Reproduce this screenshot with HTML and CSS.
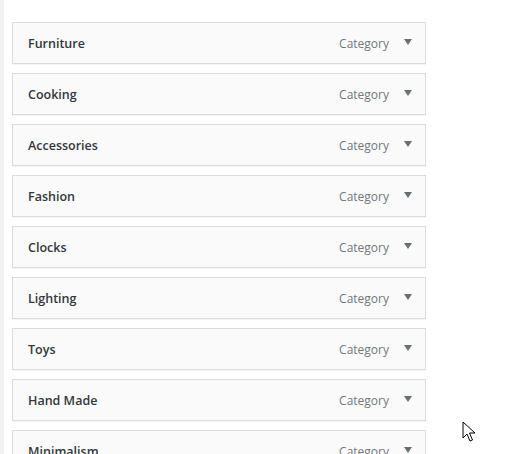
FILE: index.html
```html
<!DOCTYPE html>
<html>
<head>
<meta charset="utf-8">
<link rel="stylesheet" href="styles.css">
</head>
<body>
<div class="page">
  <div class="strip"></div>
  <ul class="menu">
    <li class="item"><span class="title">Furniture</span><span class="meta">Category<span class="arrow"></span></span></li>
    <li class="item"><span class="title">Cooking</span><span class="meta">Category<span class="arrow"></span></span></li>
    <li class="item"><span class="title">Accessories</span><span class="meta">Category<span class="arrow"></span></span></li>
    <li class="item"><span class="title">Fashion</span><span class="meta">Category<span class="arrow"></span></span></li>
    <li class="item"><span class="title">Clocks</span><span class="meta">Category<span class="arrow"></span></span></li>
    <li class="item"><span class="title">Lighting</span><span class="meta">Category<span class="arrow"></span></span></li>
    <li class="item"><span class="title">Toys</span><span class="meta">Category<span class="arrow"></span></span></li>
    <li class="item"><span class="title">Hand Made</span><span class="meta">Category<span class="arrow"></span></span></li>
    <li class="item"><span class="title">Minimalism</span><span class="meta">Category<span class="arrow"></span></span></li>
  </ul>
  <svg class="cursor" width="14" height="22" viewBox="0 0 14 22">
    <path d="M1 1 L1 17 L5 13 L8 20 L10.5 19 L7.5 12 L13 12 Z" fill="#fff" stroke="#000" stroke-width="1" stroke-linejoin="miter"/>
  </svg>
</div>
</body>
</html>
```
FILE: styles.css
```css
html, body {
  margin: 0;
  padding: 0;
  background: #fff;
  overflow: hidden;
}
.page {
  position: relative;
  width: 532px;
  height: 454px;
  overflow: hidden;
  font-family: "Open Sans", "Noto Sans", sans-serif;
}
.strip {
  position: absolute;
  left: 0;
  top: 0;
  width: 4px;
  height: 454px;
  background: #f3f3f3;
}
.menu {
  list-style: none;
  margin: 0;
  padding: 22px 0 0 12px;
  display: flex;
  flex-direction: column;
  gap: 9px;
  width: 414px;
}
.item {
  box-sizing: border-box;
  height: 42px;
  border: 1px solid #dcdcdc;
  background: #fafafa;
  box-shadow: 0 1px 1px rgba(0,0,0,0.04);
  display: flex;
  align-items: center;
  justify-content: space-between;
  padding: 0 13px 0 15px;
}
.title {
  font-size: 12.5px;
  font-weight: 600;
  color: #32373c;
}
.meta {
  display: flex;
  align-items: center;
  font-size: 12px;
  color: #72777c;
}
.arrow {
  display: inline-block;
  width: 0;
  height: 0;
  margin-left: 15px;
  margin-top: -2px;
  border-left: 4px solid transparent;
  border-right: 4px solid transparent;
  border-top: 6px solid #6a6f74;
}
.cursor {
  position: absolute;
  left: 462px;
  top: 421px;
}
```
